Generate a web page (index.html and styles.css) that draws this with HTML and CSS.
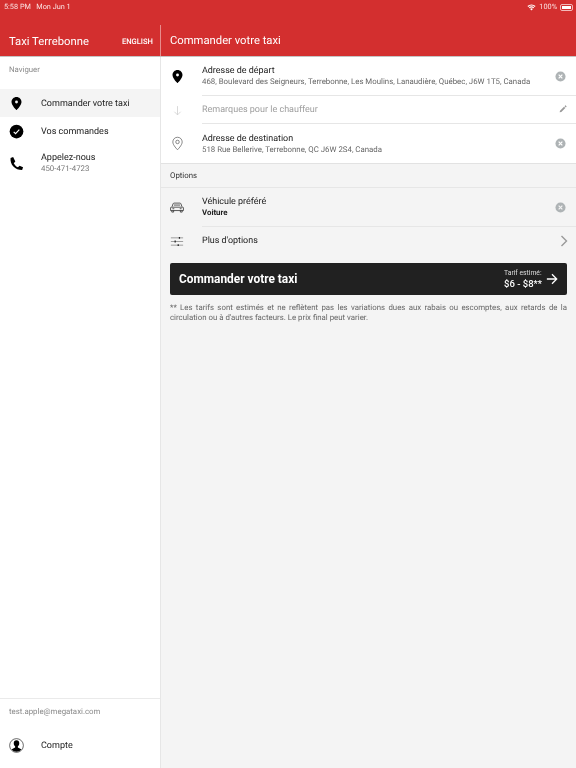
FILE: index.html
```html
<!DOCTYPE html>
<html lang="fr">
<head>
  <meta charset="UTF-8" />
  <meta name="viewport" content="width=device-width, initial-scale=1.0" />
  <title>Taxi Terrebonne</title>
  <link rel="stylesheet" href="styles.css">
</head>
<body>
  <div class="app">
    <header class="topbar">
      <div class="status">
        <span class="status-left">5:58 PM&nbsp;&nbsp; Mon Jun 1</span>
        <span class="status-right">
          <svg class="wifi" viewBox="0 0 16 12"><path d="M8 11.5 5.6 8.7a3.4 3.4 0 0 1 4.8 0z"/><path d="M4.5 7.5 3.2 6a7 7 0 0 1 9.6 0l-1.3 1.5a5.2 5.2 0 0 0-7 0z"/><path d="M2.2 4.9.8 3.3a10.6 10.6 0 0 1 14.4 0l-1.4 1.6a8.6 8.6 0 0 0-11.6 0z"/></svg>
          100%
          <span class="battery"><span class="battery-fill"></span></span>
        </span>
      </div>
      <div class="titles">
        <div class="title-left">
          <span class="brand">Taxi Terrebonne</span>
          <span class="lang">ENGLISH</span>
        </div>
        <div class="title-main">Commander votre taxi</div>
      </div>
    </header>

    <div class="columns">
      <nav class="sidebar">
        <div class="nav-head">Naviguer</div>
        <a class="nav-item active">
          <svg class="nav-icon" viewBox="0 0 24 24"><path fill-rule="evenodd" d="M12 1.500c-4.400 0-8 3.500-8 8 0 5.600 8 13 8 13s8-7.400 8-13c0-4.500-3.600-8-8-8zm0 5.800a2.300 2.300 0 1 1 0 4.600 2.300 2.300 0 0 1 0-4.600z"/></svg>
          <span>Commander votre taxi</span>
        </a>
        <a class="nav-item">
          <svg class="nav-icon" viewBox="0 0 24 24"><circle cx="12" cy="12" r="11"/><path d="m7.500 12.500 3 3 6-6.500" fill="none" stroke="#fff" stroke-width="1.800"/></svg>
          <span>Vos commandes</span>
        </a>
        <a class="nav-item nav-phone">
          <svg class="nav-icon" viewBox="0 0 24 24"><path d="M6.600 1.500 2.500 3c-.6 5 1 9.800 4.500 13.800 3.500 3.600 8.500 5.700 14 5.700l1.500-4.600-5.600-2.400-2.600 2.500c-2.900-1.400-5-3.600-6.700-6.600l2.500-2.500z"/></svg>
          <span class="nav-text">Appelez-nous<small>450-471-4723</small></span>
        </a>
        <div class="side-foot">
          <div class="email">test.apple@megataxi.com</div>
          <a class="nav-item account">
            <svg class="nav-icon" viewBox="0 0 24 24"><circle cx="12" cy="12" r="11" fill="#fff" stroke="#111" stroke-width="1"/><path d="M12 3.500c-3 0-4.600 2.400-4.400 5.200.1 2 1 3.500 2.200 4.600v1.700c-2 1-4.300 1.700-5.600 3.300a9.800 9.800 0 0 0 15.600 0c-1.300-1.600-3.600-2.300-5.600-3.300v-1.700c1.200-1.100 2.100-2.600 2.200-4.600.2-2.800-1.400-5.200-4.400-5.200z"/></svg>
            <span>Compte</span>
          </a>
        </div>
      </nav>

      <main class="content">
        <section class="card">
          <div class="row tall">
            <svg class="row-icon" viewBox="0 0 24 24"><path fill-rule="evenodd" d="M12 1.500c-4.400 0-8 3.500-8 8 0 5.600 8 13 8 13s8-7.400 8-13c0-4.500-3.600-8-8-8zm0 5.800a2.300 2.300 0 1 1 0 4.600 2.300 2.300 0 0 1 0-4.600z"/></svg>
            <div class="row-body">
              <div class="row-title">Adresse de départ</div>
              <div class="row-sub">468, Boulevard des Seigneurs, Terrebonne, Les Moulins, Lanaudière, Québec, J6W 1T5, Canada</div>
              <svg class="clear" viewBox="0 0 12 12"><circle cx="6" cy="6" r="5.500"/><path d="m4 4 4 4m0-4-4 4" stroke="#fff" stroke-width="1.300"/></svg>
            </div>
          </div>
          <div class="row short">
            <svg class="row-icon arrow-down" viewBox="0 0 24 24"><path d="M12 5v14m-5-5 5 5 5-5" fill="none" stroke="#d0d0d0" stroke-width="1.300"/></svg>
            <div class="row-body">
              <div class="row-hint">Remarques pour le chauffeur</div>
              <svg class="pencil" viewBox="0 0 12 12"><path d="m1.500 8.500 6-6 2 2-6 6-2.500.5zm6.800-6.800.9-.9a.7.7 0 0 1 1 0l1 1a.7.7 0 0 1 0 1l-.9.9z"/></svg>
            </div>
          </div>
          <div class="row tall last">
            <svg class="row-icon" viewBox="0 0 24 24"><path d="M12 2c-4.200 0-7.500 3.300-7.500 7.500C4.500 14.700 12 22 12 22s7.500-7.300 7.500-12.500C19.500 5.300 16.200 2 12 2z" fill="none" stroke="#444" stroke-width="1"/><circle cx="12" cy="9.500" r="2.800" fill="none" stroke="#444" stroke-width="1"/></svg>
            <div class="row-body">
              <div class="row-title">Adresse de destination</div>
              <div class="row-sub">518 Rue Bellerive, Terrebonne, QC J6W 2S4, Canada</div>
              <svg class="clear" viewBox="0 0 12 12"><circle cx="6" cy="6" r="5.500"/><path d="m4 4 4 4m0-4-4 4" stroke="#fff" stroke-width="1.300"/></svg>
            </div>
          </div>
        </section>

        <div class="section-label">Options</div>

        <section class="options">
          <div class="row tall">
            <svg class="row-icon car" viewBox="0 0 24 18"><path d="M4 7.500 5.500 3c.3-.8 1-1.200 1.800-1.200h9.400c.8 0 1.500.4 1.800 1.200L20 7.500M2.500 8.500h19c.6 0 1 .4 1 1V14H1.500V9.500c0-.6.4-1 1-1zM3.500 14v2.500h3V14m11 0v2.500h3V14M7 5h10M4.500 11h3m9 0h3" fill="none" stroke="#222" stroke-width="1.200"/></svg>
            <div class="row-body">
              <div class="row-title">Véhicule préféré</div>
              <div class="row-sub bold">Voiture</div>
              <svg class="clear" viewBox="0 0 12 12"><circle cx="6" cy="6" r="5.500"/><path d="m4 4 4 4m0-4-4 4" stroke="#f4f4f4" stroke-width="1.300"/></svg>
            </div>
          </div>
          <div class="row short last">
            <svg class="row-icon sliders" viewBox="0 0 24 18"><path d="M2 3h20M2 9h20M2 15h20" stroke="#444" stroke-width=".8"/><path d="M15 1.500h2v3h-2zM8 7.500h2v3H8zM13 13.500h2v3h-2z" fill="#222"/></svg>
            <div class="row-body">
              <div class="row-title">Plus d'options</div>
              <svg class="chevron" viewBox="0 0 8 12"><path d="m1.500 1 5 5-5 5" fill="none" stroke="#999" stroke-width="1.400"/></svg>
            </div>
          </div>
        </section>

        <button class="order">
          <span class="order-label">Commander votre taxi</span>
          <span class="order-price">
            <span class="price-text"><small>Tarif estimé:</small><strong>$6 - $8**</strong></span>
            <svg class="order-arrow" viewBox="0 0 14 14"><path d="M1 7h11.500M7 1.500 12.500 7 7 12.500" fill="none" stroke="#fff" stroke-width="1.500"/></svg>
          </span>
        </button>

        <p class="note">** Les tarifs sont estimés et ne reflètent pas les variations dues aux rabais ou escomptes, aux retards de la circulation ou à d'autres facteurs. Le prix final peut varier.</p>
      </main>
    </div>
  </div>
</body>
</html>
```

FILE: styles.css
```css
* {
  box-sizing: border-box;
}
html, body {
  margin: 0;
  height: 100%;
}
body {
  font-family: Roboto, Arial, sans-serif;
  color: #212121;
  background: #f4f4f4;
  overflow: hidden;
  text-rendering: geometricPrecision;
}
.app {
  display: flex;
  flex-direction: column;
  height: 768px;
  will-change: transform;
}

/* top bar */
.topbar {
  height: 57px;
  flex: none;
  background: #d32f2f;
  color: #fff;
  border-bottom: 1px solid #c4c4c4;
}
.status {
  height: 25px;
  display: flex;
  justify-content: space-between;
  align-items: flex-start;
  padding: 3px 3px 0 4px;
  font-size: 7.300px;
  line-height: 8px;
  color: #fbe3e3;
}
.status-right {
  display: flex;
  align-items: center;
  gap: 3px;
}
.wifi {
  width: 9px;
  height: 7px;
  fill: #fff;
}
.battery {
  display: block;
  width: 13px;
  height: 7px;
  padding: 1px;
  border: 1px solid #f3b9b9;
  border-radius: 2px;
}
.battery-fill {
  display: block;
  height: 100%;
  background: #fff;
}
.titles {
  display: flex;
  height: 31px;
}
.title-left {
  width: 161px;
  padding: 1px 7px 0 9px;
  display: flex;
  justify-content: space-between;
  align-items: center;
  border-right: 1px solid #e78c8c;
}
.brand {
  font-size: 11.250px;
}
.lang {
  font-size: 7.600px;
  font-weight: 500;
}
.title-main {
  padding-left: 9px;
  font-size: 11.250px;
  line-height: 32px;
}

.columns {
  flex: 1;
  display: flex;
  min-height: 0;
}

/* sidebar */
.sidebar {
  width: 161px;
  flex: none;
  display: flex;
  flex-direction: column;
  background: #fff;
  border-right: 1px solid #e6e6e6;
}
.nav-head {
  height: 32px;
  padding: 8px 9px 0;
  font-size: 7.800px;
  line-height: 10px;
  color: #8a8a8a;
}
.nav-item {
  display: flex;
  align-items: center;
  height: 28px;
  padding-left: 9px;
  font-size: 9px;
  color: #212121;
}
.nav-item span {
  padding-top: 1px;
}
.nav-item.active {
  background: #f4f4f4;
}
.nav-icon {
  width: 15px;
  height: 15px;
  margin-right: 17px;
  flex: none;
}
.nav-phone {
  height: 36px;
}
.nav-text small {
  display: block;
  font-size: 7.850px;
  line-height: 10px;
  color: #777;
  margin-top: 1px;
}
.side-foot {
  margin-top: auto;
  height: 70px;
  border-top: 1px solid #eaeaea;
}
.email {
  height: 32px;
  padding: 8px 9px 0;
  font-size: 7.850px;
  line-height: 10px;
  color: #8a8a8a;
}
.account {
  height: 28px;
}

/* main column */
.content {
  flex: 1;
  min-width: 0;
}
.card {
  background: #fff;
  border-bottom: 1px solid #e2e2e2;
}
.row {
  display: flex;
}
.row-icon {
  width: 15px;
  height: 15px;
  flex: none;
  margin: 0 17px 0 9px;
  align-self: center;
}
.row-body {
  flex: 1;
  min-width: 0;
  position: relative;
  display: flex;
  flex-direction: column;
  justify-content: center;
  border-bottom: 1px solid #e6e6e6;
}
.row.last .row-body {
  border-bottom: none;
}
.row.tall {
  height: 39px;
}
.row.short {
  height: 28px;
}
.row-title {
  font-size: 8.950px;
  line-height: 12px;
}
.row-sub {
  font-size: 7.850px;
  line-height: 10px;
  color: #666;
}
.row-sub.bold {
  font-size: 7.850px;
  font-weight: 700;
  color: #212121;
}
.row-hint {
  font-size: 9px;
  color: #9e9e9e;
}
.clear {
  position: absolute;
  right: 10px;
  top: 13.500px;
  width: 11px;
  height: 11px;
  fill: #aeb3b5;
}
.pencil {
  position: absolute;
  right: 9px;
  top: 9px;
  width: 8px;
  height: 8px;
  fill: #999;
}
.chevron {
  position: absolute;
  right: 8px;
  top: 8px;
  width: 8px;
  height: 12px;
}
.section-label {
  height: 24px;
  padding-left: 9px;
  font-size: 7.850px;
  line-height: 23px;
  color: #333;
  border-bottom: 1px solid #e6e6e6;
}
.car,
.sliders {
  height: 11px;
  width: 16px;
  margin-right: 17px;
  margin-left: 8px;
}

/* order button */
.order {
  display: flex;
  justify-content: space-between;
  align-items: center;
  width: 397px;
  height: 32px;
  margin: 8px 9px 0;
  padding: 0 9px;
  border: none;
  border-radius: 2px;
  background: #212121;
  color: #fff;
  font-family: inherit;
}
.order-label {
  font-size: 11.900px;
  font-weight: 700;
}
.order-price {
  display: flex;
  align-items: center;
  gap: 4px;
}
.price-text {
  text-align: left;
}
.price-text small {
  display: block;
  font-size: 6.800px;
  line-height: 9px;
  color: #ddd;
}
.price-text strong {
  display: block;
  font-size: 9.500px;
  line-height: 11px;
  font-weight: 500;
}
.order-arrow {
  width: 12px;
  height: 12px;
}
.note {
  margin: 8px 9px 0;
  font-size: 7.850px;
  line-height: 10px;
  color: #666;
  text-align: justify;
}
```
